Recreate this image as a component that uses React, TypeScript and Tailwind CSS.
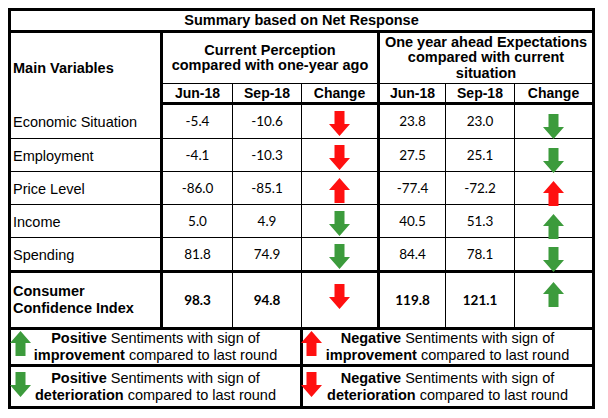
import React from "react";

const RED = "#ff1010";
const GREEN = "#3c9b3c";

function Arrow({ dir, color, className = "" }: { dir: "up" | "down"; color: string; className?: string }) {
  const pts =
    dir === "down"
      ? "5.5,0 15.5,0 15.5,13 21,13 10.5,25 0,13 5.5,13"
      : "5.5,25 15.5,25 15.5,12 21,12 10.5,0 0,12 5.5,12";
  return (
    <svg width="21" height="25" viewBox="0 0 21 25" className={className}>
      <polygon points={pts} fill={color} />
    </svg>
  );
}

type Row = {
  label: string;
  a: string;
  b: string;
  ca: ["up" | "down", string];
  c: string;
  d: string;
  cb: ["up" | "down", string];
  h: string;
};

const rows: Row[] = [
  { label: "Economic Situation", a: "-5.4", b: "-10.6", ca: ["down", RED], c: "23.8", d: "23.0", cb: ["down", GREEN], h: "h-[35px]" },
  { label: "Employment", a: "-4.1", b: "-10.3", ca: ["down", RED], c: "27.5", d: "25.1", cb: ["down", GREEN], h: "h-[33px]" },
  { label: "Price Level", a: "-86.0", b: "-85.1", ca: ["up", RED], c: "-77.4", d: "-72.2", cb: ["up", RED], h: "h-[33px]" },
  { label: "Income", a: "5.0", b: "4.9", ca: ["down", GREEN], c: "40.5", d: "51.3", cb: ["up", GREEN], h: "h-[33px]" },
  { label: "Spending", a: "81.8", b: "74.9", ca: ["down", GREEN], c: "84.4", d: "78.1", cb: ["down", GREEN], h: "h-[34px]" },
];

const arial = "font-['Liberation_Sans',Arial,sans-serif]";
const num = "font-['Lato','Open_Sans',sans-serif] text-[13.5px] text-center";

export default function App() {
  return (
    <div className="w-[608px] h-[418px] bg-white text-black">
      <div className="pt-[8px] pl-[8px]">
        <table className={`border-collapse border-[3px] border-black ${arial} w-[584px] table-fixed`}>
          <colgroup>
            <col className="w-[152px]" />
            <col className="w-[71px]" />
            <col className="w-[69px]" />
            <col className="w-[77px]" />
            <col className="w-[67px]" />
            <col className="w-[69px]" />
            <col className="w-[79px]" />
          </colgroup>
          <tbody>
            <tr>
              <td colSpan={7} className="h-[22px] p-0 text-center font-bold text-[14.5px] leading-[17px] border-b-[3px] border-black">
                Summary based on Net Response
              </td>
            </tr>
            <tr>
              <td rowSpan={2} className="p-0 pl-[2px] font-bold text-[14.5px] leading-[17px] border-r-[3px] border-black align-middle">
                Main Variables
              </td>
              <td colSpan={3} className="h-[52px] p-0 text-center font-bold text-[14.5px] leading-[15px] border-r-[3px] border-b border-black">
                Current Perception
                <br />
                compared with one-year ago
              </td>
              <td colSpan={3} className="p-0 text-center font-bold text-[14.5px] leading-[15.5px] border-b border-black">
                One year ahead Expectations
                <br />
                compared with current
                <br />
                situation
              </td>
            </tr>
            <tr className="font-bold text-[14px] leading-[16px] text-center">
              <td className="h-[20px] p-0 border-r border-b-[3px] border-black">Jun-18</td>
              <td className="p-0 border-r border-b-[3px] border-black">Sep-18</td>
              <td className="p-0 border-r-[3px] border-b-[3px] border-black">Change</td>
              <td className="p-0 border-r border-b-[3px] border-black">Jun-18</td>
              <td className="p-0 border-r border-b-[3px] border-black">Sep-18</td>
              <td className="p-0 border-b-[3px] border-black">Change</td>
            </tr>
            {rows.map((r) => (
              <tr key={r.label}>
                <td className={`${r.h} p-0 pl-[2px] text-[14.5px] leading-[17px] border-r-[3px] border-b border-black`}>
                  <div className="pt-[3px]">{r.label}</div>
                </td>
                <td className={`${num} p-0 border-r border-b border-black`}>{r.a}</td>
                <td className={`${num} p-0 border-r border-b border-black`}>{r.b}</td>
                <td className="p-0 border-r-[3px] border-b border-black">
                  <div className="flex justify-center">
                    <Arrow dir={r.ca[0]} color={r.ca[1]} className="translate-y-[2px]" />
                  </div>
                </td>
                <td className={`${num} p-0 border-r border-b border-black`}>{r.c}</td>
                <td className={`${num} p-0 border-r border-b border-black`}>{r.d}</td>
                <td className="p-0 border-b border-black">
                  <div className="flex justify-center">
                    <Arrow dir={r.cb[0]} color={r.cb[1]} className="translate-y-[5px]" />
                  </div>
                </td>
              </tr>
            ))}
            <tr className="border-t-[3px] border-black">
              <td className="h-[57px] p-0 pl-[2px] font-bold text-[14.5px] leading-[17.5px] border-r-[3px] border-black">
                Consumer
                <br />
                Confidence Index
              </td>
              <td className={`${num} font-bold p-0 border-r border-black`}>98.3</td>
              <td className={`${num} font-bold p-0 border-r border-black`}>94.8</td>
              <td className="p-0 border-r-[3px] border-black">
                <div className="flex justify-center pb-[7px]">
                  <Arrow dir="down" color={RED} />
                </div>
              </td>
              <td className={`${num} font-bold p-0 border-r border-black`}>119.8</td>
              <td className={`${num} font-bold p-0 border-r border-black`}>121.1</td>
              <td className="p-0 border-black">
                <div className="flex justify-center pb-[12px]">
                  <Arrow dir="up" color={GREEN} />
                </div>
              </td>
            </tr>
            <tr className="border-t-[3px] border-black">
              <td colSpan={3} className="h-[35px] p-0 border-r-[3px] border-b-[3px] border-black">
                <div className="relative text-center text-[14.5px] leading-[17px]">
                  <Arrow dir="up" color={GREEN} className="absolute left-[-1px] top-[1px]" />
                  <b>Positive</b> Sentiments with sign of
                  <br />
                  <b>improvement</b> compared to last round
                </div>
              </td>
              <td colSpan={4} className="p-0 border-b-[3px] border-black">
                <div className="relative text-center text-[14.5px] leading-[17px]">
                  <Arrow dir="up" color={RED} className="absolute left-[-2px] top-[1px]" />
                  <b>Negative</b> Sentiments with sign of
                  <br />
                  <b>improvement</b> compared to last round
                </div>
              </td>
            </tr>
            <tr>
              <td colSpan={3} className="h-[42px] p-0 border-r-[3px] border-black">
                <div className="relative text-center text-[14.5px] leading-[17px]">
                  <Arrow dir="down" color={GREEN} className="absolute left-[-1px] top-[2px]" />
                  <b>Positive</b> Sentiments with sign of
                  <br />
                  <b>deterioration</b> compared to last round
                </div>
              </td>
              <td colSpan={4} className="p-0 border-black">
                <div className="relative text-center text-[14.5px] leading-[17px]">
                  <Arrow dir="down" color={RED} className="absolute left-[-2px] top-[2px]" />
                  <b>Negative</b> Sentiments with sign of
                  <br />
                  <b>deterioration</b> compared to last round
                </div>
              </td>
            </tr>
          </tbody>
        </table>
      </div>
    </div>
  );
}
